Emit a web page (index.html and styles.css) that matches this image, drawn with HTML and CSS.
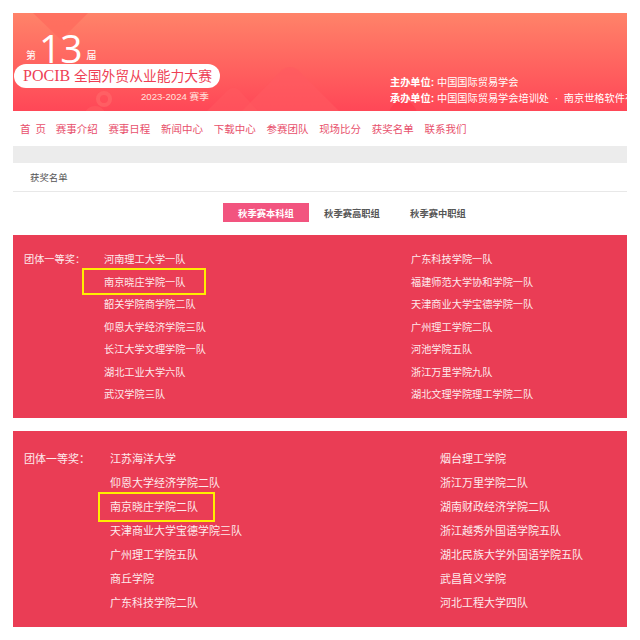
FILE: index.html
```html
<!DOCTYPE html>
<html lang="en">
<head>
    <meta charset="UTF-8">
    <title>POCIB 获奖名单</title>
    <link rel="stylesheet" href="styles.css">
</head>
<body>
    <div class="page">
        <div class="banner">
            <svg class="banner-art" width="614" height="98" viewBox="0 0 614 98">
                <path d="M20 0 H75 L48 27 Z" fill="#ff6a5c" opacity="0.7"/>
                <path d="M229 98 L268 58 Q277 50 286 58 L326 98 Z" fill="#ff5a60" opacity="0.6"/>
                <path d="M194 98 L214 78 Q220 72 226 77 L245 98 Z" fill="#ff5a60" opacity="0.5"/>
                <circle cx="82" cy="104" r="11" fill="#ff5a60" opacity="0.7"/>
                <circle cx="91" cy="86" r="6" fill="none" stroke="#ff6a6a" stroke-width="4" opacity="0.6"/>
                <circle cx="390" cy="102" r="14" fill="#ff3f50"/>
            </svg>
            <div class="brand">
                <div class="edition"><span>第</span><b>13</b><span>届</span></div>
                <div class="pill"><em>POCIB</em> 全国外贸从业能力大赛</div>
                <div class="season">2023-2024 赛季</div>
            </div>
            <div class="hosts">
                <div><b>主办单位:</b> 中国国际贸易学会</div>
                <div><b>承办单位:</b> 中国国际贸易学会培训处&nbsp; ·&nbsp; 南京世格软件有</div>
            </div>
        </div>

        <div class="nav">
            <a class="home">首 页</a>
            <a>赛事介绍</a>
            <a>赛事日程</a>
            <a>新闻中心</a>
            <a>下载中心</a>
            <a>参赛团队</a>
            <a>现场比分</a>
            <a>获奖名单</a>
            <a>联系我们</a>
        </div>

        <div class="gray-bar"></div>
        <div class="crumb">获奖名单</div>

        <div class="tabs">
            <div class="tab active">秋季赛本科组</div>
            <div class="tab">秋季赛高职组</div>
            <div class="tab">秋季赛中职组</div>
        </div>

        <div class="panel panel-one">
            <div class="label">团体一等奖：</div>
            <div class="names">
                <div>河南理工大学一队</div>
                <div class="marked">南京晓庄学院一队<i class="mark"></i></div>
                <div>韶关学院商学院二队</div>
                <div>仰恩大学经济学院三队</div>
                <div>长江大学文理学院一队</div>
                <div>湖北工业大学六队</div>
                <div>武汉学院三队</div>
            </div>
            <div class="names">
                <div>广东科技学院一队</div>
                <div>福建师范大学协和学院一队</div>
                <div>天津商业大学宝德学院一队</div>
                <div>广州理工学院二队</div>
                <div>河池学院五队</div>
                <div>浙江万里学院九队</div>
                <div>湖北文理学院理工学院二队</div>
            </div>
        </div>

        <div class="panel panel-two">
            <div class="label">团体一等奖：</div>
            <div class="names">
                <div>江苏海洋大学</div>
                <div>仰恩大学经济学院二队</div>
                <div class="marked">南京晓庄学院二队<i class="mark"></i></div>
                <div>天津商业大学宝德学院三队</div>
                <div>广州理工学院五队</div>
                <div>商丘学院</div>
                <div>广东科技学院二队</div>
            </div>
            <div class="names">
                <div>烟台理工学院</div>
                <div>浙江万里学院二队</div>
                <div>湖南财政经济学院二队</div>
                <div>浙江越秀外国语学院五队</div>
                <div>湖北民族大学外国语学院五队</div>
                <div>武昌首义学院</div>
                <div>河北工程大学四队</div>
            </div>
        </div>
    </div>
</body>
</html>
```

FILE: styles.css
```css
body {
    margin: 0;
    background: #fff;
    font-family: "Liberation Sans", "Noto Sans CJK SC", sans-serif;
}
.page {
    width: 614px;
    margin: 13px 0 0 13px;
}

/* banner */
.banner {
    position: relative;
    height: 98px;
    overflow: hidden;
    background: linear-gradient(180deg, #ff8369 0%, #ff4757 100%);
    color: #fff;
    display: flex;
}
.banner-art {
    position: absolute;
    left: 0;
    top: 0;
}
.brand {
    position: relative;
    flex: none;
    width: 377px;
    padding: 19px 0 0 1px;
    box-sizing: border-box;
}
.edition {
    display: flex;
    align-items: flex-end;
    height: 32px;
    padding-left: 12px;
    font-size: 10px;
}
.edition span {
    line-height: 13px;
    margin-bottom: 2px;
}
.edition b {
    font-family: "Open Sans", sans-serif;
    font-weight: 400;
    font-size: 39px;
    line-height: 28px;
    margin: 0 5px 2px 3px;
    letter-spacing: -1px;
}
.pill {
    width: 206px;
    height: 24px;
    box-sizing: border-box;
    padding-left: 9px;
    border-radius: 12px;
    background: #fff;
    color: #ee3f55;
    font-size: 13.8px;
    line-height: 24px;
    white-space: nowrap;
}
.pill em {
    font-family: "Liberation Serif", serif;
    font-style: normal;
    font-size: 16px;
}
.season {
    padding: 2px 0 0 127px;
    font-size: 9.6px;
    line-height: 13px;
    color: #ffe3df;
}
.hosts {
    position: relative;
    flex: none;
    width: 237px;
    overflow: hidden;
    padding-top: 62px;
    font-size: 10.2px;
    line-height: 16px;
    white-space: nowrap;
}

/* nav */
.nav {
    display: flex;
    height: 35px;
    align-items: center;
    padding-left: 7px;
    gap: 10.7px;
    color: #e8506c;
    font-size: 10.5px;
}
.nav a {
    width: 42px;
}
.nav a.home {
    width: 25px;
    letter-spacing: 1px;
    white-space: pre;
}

.gray-bar {
    height: 17px;
    background: #ececec;
}
.crumb {
    height: 29px;
    padding-left: 17px;
    border-bottom: 1px solid #e8e8e8;
    box-sizing: border-box;
    font-size: 9.4px;
    line-height: 30px;
    color: #555;
}

/* tabs */
.tabs {
    display: flex;
    padding: 11px 0 13px 210px;
}
.tab {
    width: 86px;
    height: 19px;
    font-size: 9.3px;
    font-weight: bold;
    line-height: 22px;
    text-align: center;
    color: #555;
}
.tab.active {
    background: #f2547f;
    color: #fff;
}

/* award panels */
.panel {
    display: flex;
    background: #ea3d55;
    color: #fdeaec;
}
.panel .label,
.panel .names {
    flex: none;
    white-space: nowrap;
}
.panel-one {
    height: 183px;
    padding: 14px 0 0 11px;
    box-sizing: border-box;
    font-size: 10.2px;
    line-height: 22.5px;
}
.panel-one .label {
    width: 80px;
}
.panel-one .names {
    width: 307px;
}
.panel-one .names + .names {
    width: 216px;
}
.panel-two {
    height: 196px;
    margin-top: 13px;
    padding: 16px 0 0 11px;
    box-sizing: border-box;
    font-size: 11px;
    line-height: 24px;
}
.panel-two .label {
    width: 86px;
}
.panel-two .names {
    width: 330px;
}
.panel-two .names + .names {
    width: 187px;
}
.marked {
    position: relative;
}
.mark {
    position: absolute;
    border: 2px solid #ffee00;
}
.panel-one .mark {
    left: -22px;
    top: -4px;
    width: 120px;
    height: 23px;
}
.panel-two .mark {
    left: -12px;
    top: -3px;
    width: 113px;
    height: 26px;
}
```
